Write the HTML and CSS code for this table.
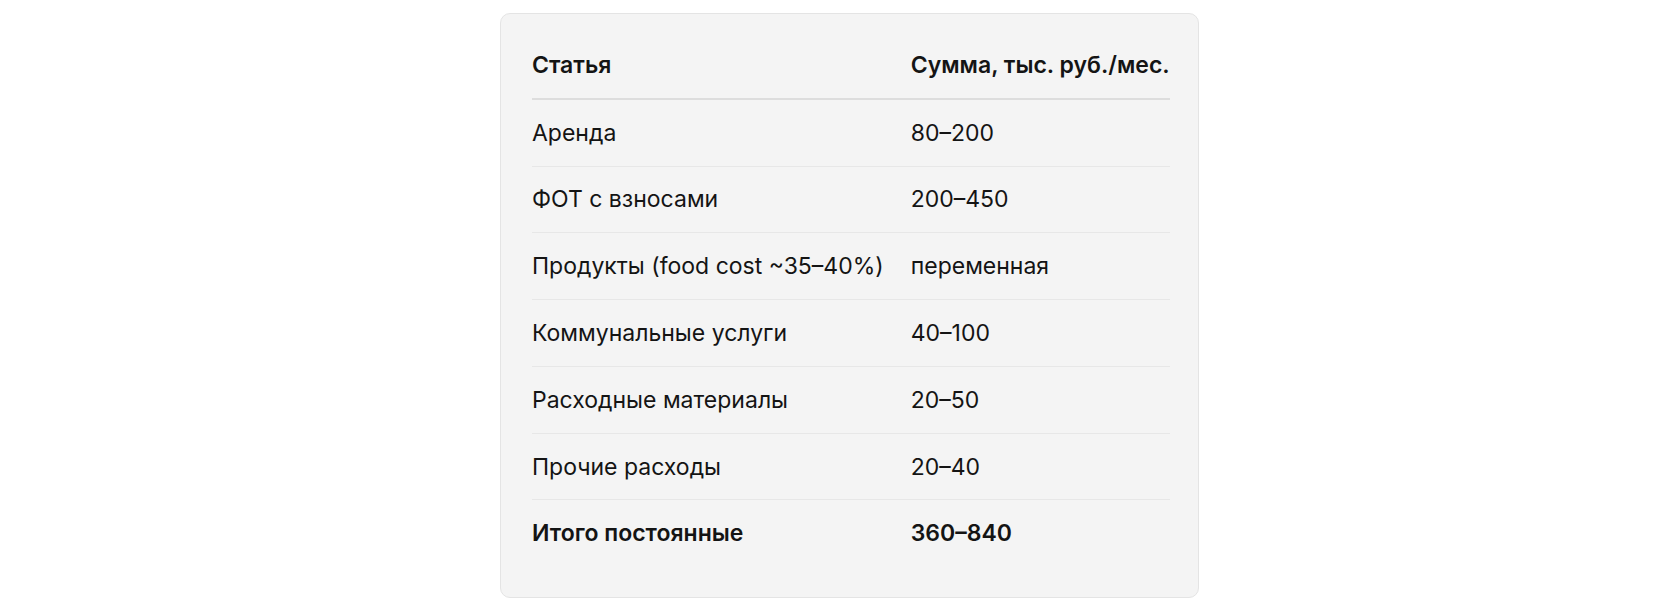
FILE: index.html
```html
<!DOCTYPE html>
<html lang="ru">
<head>
<meta charset="utf-8">
<title>Постоянные расходы</title>
<link rel="stylesheet" href="styles.css">
</head>
<body>
<div class="page">
  <div class="card">
    <table class="costs">
      <thead>
        <tr><th class="item">Статья</th><th class="sum">Сумма, тыс. руб./мес.</th></tr>
      </thead>
      <tbody>
        <tr><td class="item">Аренда</td><td class="sum">80–200</td></tr>
        <tr><td class="item">ФОТ с взносами</td><td class="sum">200–450</td></tr>
        <tr><td class="item">Продукты (food cost ~35–40%)</td><td class="sum">переменная</td></tr>
        <tr><td class="item">Коммунальные услуги</td><td class="sum">40–100</td></tr>
        <tr><td class="item">Расходные материалы</td><td class="sum">20–50</td></tr>
        <tr><td class="item">Прочие расходы</td><td class="sum">20–40</td></tr>
        <tr class="total"><td class="item">Итого постоянные</td><td class="sum">360–840</td></tr>
      </tbody>
    </table>
  </div>
</div>
</body>
</html>
```
FILE: styles.css
```css
html, body {
  margin: 0;
  padding: 0;
  background: #ffffff;
}
body {
  font-family: Inter, "Noto Sans", "Liberation Sans", sans-serif;
  color: #141414;
}
.page {
  padding-top: 13px;
  padding-left: 500px;
}
.card {
  display: inline-block;
  background: #f4f4f4;
  border: 1px solid #e4e4e4;
  border-radius: 10px;
  padding: 18px 28px 31px 31px;
}
.costs {
  border-collapse: collapse;
  font-size: 23px;
  line-height: 24px;
}
.costs th,
.costs td {
  text-align: left;
  padding: 20.9px 0;
  white-space: nowrap;
}
.costs th {
  font-weight: 600;
  border-bottom: 2px solid #dddddd;
}
.costs td {
  font-weight: 400;
  border-bottom: 1px solid #e7e7e7;
}
.costs .item {
  padding-right: 27px;
}
.costs tr.total td {
  font-weight: 600;
  border-bottom: none;
}
```
